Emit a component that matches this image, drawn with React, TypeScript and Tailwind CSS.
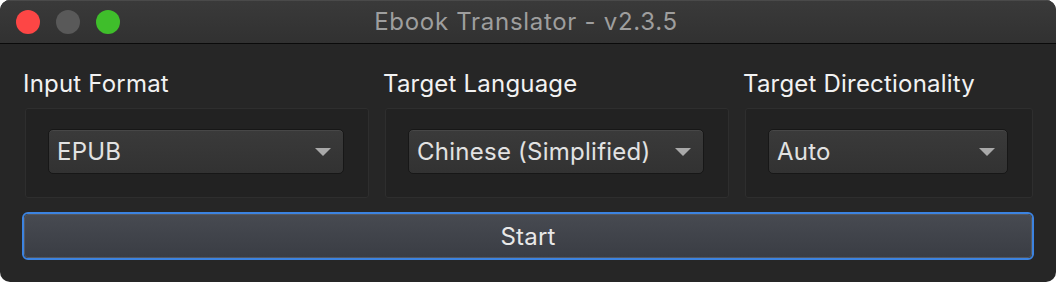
import React from "react";

const font = { fontFamily: 'Inter, "Noto Sans", sans-serif' };

function Caret() {
  return (
    <svg width="16" height="8" viewBox="0 0 16 8" className="shrink-0">
      <path d="M0 0 H16 L8 8 Z" fill="#a9a9a9" />
    </svg>
  );
}

function Field({ label, value, colW, comboW }: { label: string; value: string; colW: string; comboW: string }) {
  return (
    <div className={`flex flex-col ${colW}`}>
      <div className="text-[24px] leading-[30px] text-[#f2f2f2] tracking-[0.2px]">{label}</div>
      <div className="mt-[9px] ml-[2px] h-[90px] rounded-[3px] border border-[#2e2e2e] bg-[#222222] pl-[22px] pt-[20px]">
        <div
          className={`${comboW} h-[45px] rounded-[5px] border border-[#171717] bg-gradient-to-b from-[#3a3a3a] to-[#323232] shadow-[inset_0_1px_0_#474747] flex items-center justify-between pl-[8px] pr-[12px]`}
        >
          <span className="text-[24px] leading-none text-[#e2e2e2] tracking-[0.25px]">{value}</span>
          <Caret />
        </div>
      </div>
    </div>
  );
}

export default function App() {
  return (
    <div className="w-[1056px] h-[282px] bg-white" style={font}>
      <div className="h-full rounded-[10px] overflow-hidden bg-[#262626] flex flex-col">
        <div className="h-[44px] shrink-0 border-b border-[#0a0a0a] bg-gradient-to-b from-[#3a3a3a] to-[#313131] shadow-[inset_0_1px_0_#4a4a4a] grid grid-cols-[1fr_auto_1fr] items-center">
          <div className="flex items-center gap-[16px] pl-[16px]">
            <div className="w-[24px] h-[24px] rounded-full bg-[#fd4645]" />
            <div className="w-[24px] h-[24px] rounded-full bg-[#595959]" />
            <div className="w-[24px] h-[24px] rounded-full bg-[#3fbe2b]" />
          </div>
          <div className="text-[24px] leading-none text-[#9e9e9e] tracking-[0.7px] -translate-x-[2px]">Ebook Translator - v2.3.5</div>
          <div />
        </div>
        <div className="px-[22px] pt-[25px] flex flex-col">
          <div className="flex gap-[14px] pl-[1px]">
            <Field label="Input Format" value="EPUB" colW="w-[346px]" comboW="w-[296px]" />
            <Field label="Target Language" value="Chinese (Simplified)" colW="w-[346px]" comboW="w-[296px]" />
            <Field label="Target Directionality" value="Auto" colW="w-[290px]" comboW="w-[240px]" />
          </div>
          <button className="mt-[14px] h-[48px] w-full rounded-[6px] border-2 border-[#3c83e0] p-0 bg-transparent">
            <div className="h-full w-full rounded-[4px] border border-[#555961] bg-gradient-to-b from-[#474a51] to-[#3a3d44] flex items-center justify-center pt-[2px] text-[24px] text-[#e8e8e8] tracking-[0.2px]">
              Start
            </div>
          </button>
        </div>
      </div>
    </div>
  );
}
